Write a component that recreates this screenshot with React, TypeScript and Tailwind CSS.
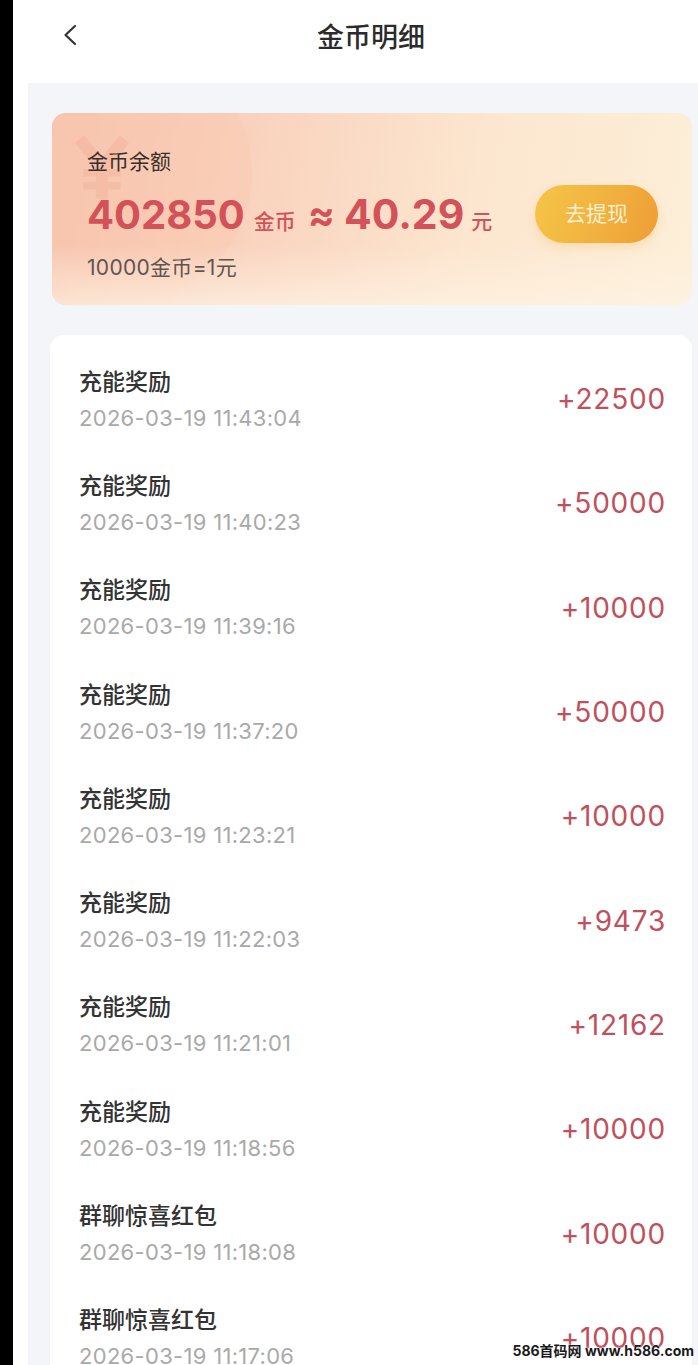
type Record = {
  title: string
  time: string
  amount: string
}

const records: Record[] = [
  { title: '充能奖励', time: '2026-03-19 11:43:04', amount: '+22500' },
  { title: '充能奖励', time: '2026-03-19 11:40:23', amount: '+50000' },
  { title: '充能奖励', time: '2026-03-19 11:39:16', amount: '+10000' },
  { title: '充能奖励', time: '2026-03-19 11:37:20', amount: '+50000' },
  { title: '充能奖励', time: '2026-03-19 11:23:21', amount: '+10000' },
  { title: '充能奖励', time: '2026-03-19 11:22:03', amount: '+9473' },
  { title: '充能奖励', time: '2026-03-19 11:21:01', amount: '+12162' },
  { title: '充能奖励', time: '2026-03-19 11:18:56', amount: '+10000' },
  { title: '群聊惊喜红包', time: '2026-03-19 11:18:08', amount: '+10000' },
  { title: '群聊惊喜红包', time: '2026-03-19 11:17:06', amount: '+10000' },
]

const font = "font-['Inter','Noto_Sans_CJK_SC',sans-serif]"

function BackIcon() {
  return (
    <svg width="16" height="22" viewBox="0 0 16 22" fill="none" className="text-[#333]">
      <path d="M13 2 L3.5 11 L13 20" stroke="currentColor" strokeWidth="2.2" strokeLinecap="round" strokeLinejoin="round" />
    </svg>
  )
}

// faint yuan sign drawn behind the balance
function YuanMark() {
  return (
    <svg width="56" height="66" viewBox="0 0 60 70" fill="none" className="absolute top-[22px] left-[22px] opacity-25">
      <path d="M6 4 L30 34 L54 4" stroke="#ec9a88" strokeWidth="13" strokeLinejoin="miter" />
      <path d="M30 32 V68" stroke="#ec9a88" strokeWidth="13" />
      <path d="M10 40 H50 M10 54 H50" stroke="#ec9a88" strokeWidth="8" />
    </svg>
  )
}

export default function App() {
  return (
    <div className={`relative flex h-[1365px] w-[698px] overflow-hidden bg-black ${font}`}>
      <div className="w-[13px] shrink-0" />
      <div className="flex min-w-0 flex-1 flex-col bg-white">
        <header className="flex h-[83px] shrink-0 items-center pl-[49px]">
          <div className="-translate-y-[7px]">
            <BackIcon />
          </div>
          <h1 className="ml-[239px] -translate-y-[3px] text-[27px] font-medium text-[#2b2b2b]">金币明细</h1>
        </header>

        <div className="flex flex-1 pl-[15px]">
          <main className="flex flex-1 flex-col bg-[#f4f5f9] pt-[30px] pr-[6px] pl-[22px]">
            <section className="relative ml-[2px] flex h-[192px] items-center overflow-hidden rounded-[14px] bg-[linear-gradient(100deg,#f6bfa9_0%,#f9d2bd_30%,#fce6cf_65%,#fdefd8_100%)] pr-[34px] pl-[35px]">
              <div className="absolute -top-[70px] -left-[60px] h-[260px] w-[260px] rounded-full bg-[#f9c9b2]/50" />
              <div className="absolute bottom-0 left-0 h-[60px] w-full bg-gradient-to-t from-[#fef3e4]/70 to-transparent" />
              <YuanMark />

              <div className="relative flex-1 self-start pt-[35px]">
                <p className="text-[21px] leading-[28px] text-[#3a2e2b]">金币余额</p>
                <p className="mt-[14px] flex items-baseline leading-[48px] text-[#d3525a]">
                  <span className="text-[40px] font-bold">402850</span>
                  <span className="ml-[9px] text-[21px] font-medium">金币</span>
                  <span className="ml-[12px] text-[40px] font-bold">≈</span>
                  <span className="ml-[9px] text-[41px] font-bold">40.29</span>
                  <span className="ml-[7px] text-[21px] font-medium">元</span>
                </p>
                <p className="mt-[9px] text-[21px] leading-[26px] tracking-[0.3px] text-[#5e5552]">10000金币=1元</p>
              </div>

              <button className="relative mt-[10px] h-[58px] w-[123px] rounded-full bg-[linear-gradient(110deg,#f5c547_0%,#f1b13f_55%,#ee9d35_100%)] text-[21px] text-[#fdf0d2] shadow-[0_4px_10px_rgba(240,170,60,0.25)]">
                去提现
              </button>
            </section>

            <section className="mt-[30px] flex-1 rounded-t-[14px] bg-white pt-[12px]">
              {records.map((r, i) => (
                <div key={i} className="flex h-[104.3px] items-center justify-between pr-[26px] pl-[29px]">
                  <div className="flex flex-col gap-[7px]">
                    <span className="text-[23px] leading-[30px] font-medium text-[#333]">{r.title}</span>
                    <span className="text-[22px] leading-[28px] tracking-[0.3px] text-[#a9a9a9]">{r.time}</span>
                  </div>
                  <span className="text-[28px] leading-[34px] tracking-[0.8px] text-[#c0505c]">{r.amount}</span>
                </div>
              ))}
            </section>
          </main>
        </div>
      </div>

      <span className="absolute right-[4px] bottom-[6px] text-[14px] leading-[16px] font-bold text-[#1a1a1a] [text-shadow:0_0_2px_#fff,0_0_2px_#fff]">
        586首码网 www.h586.com
      </span>
    </div>
  )
}
